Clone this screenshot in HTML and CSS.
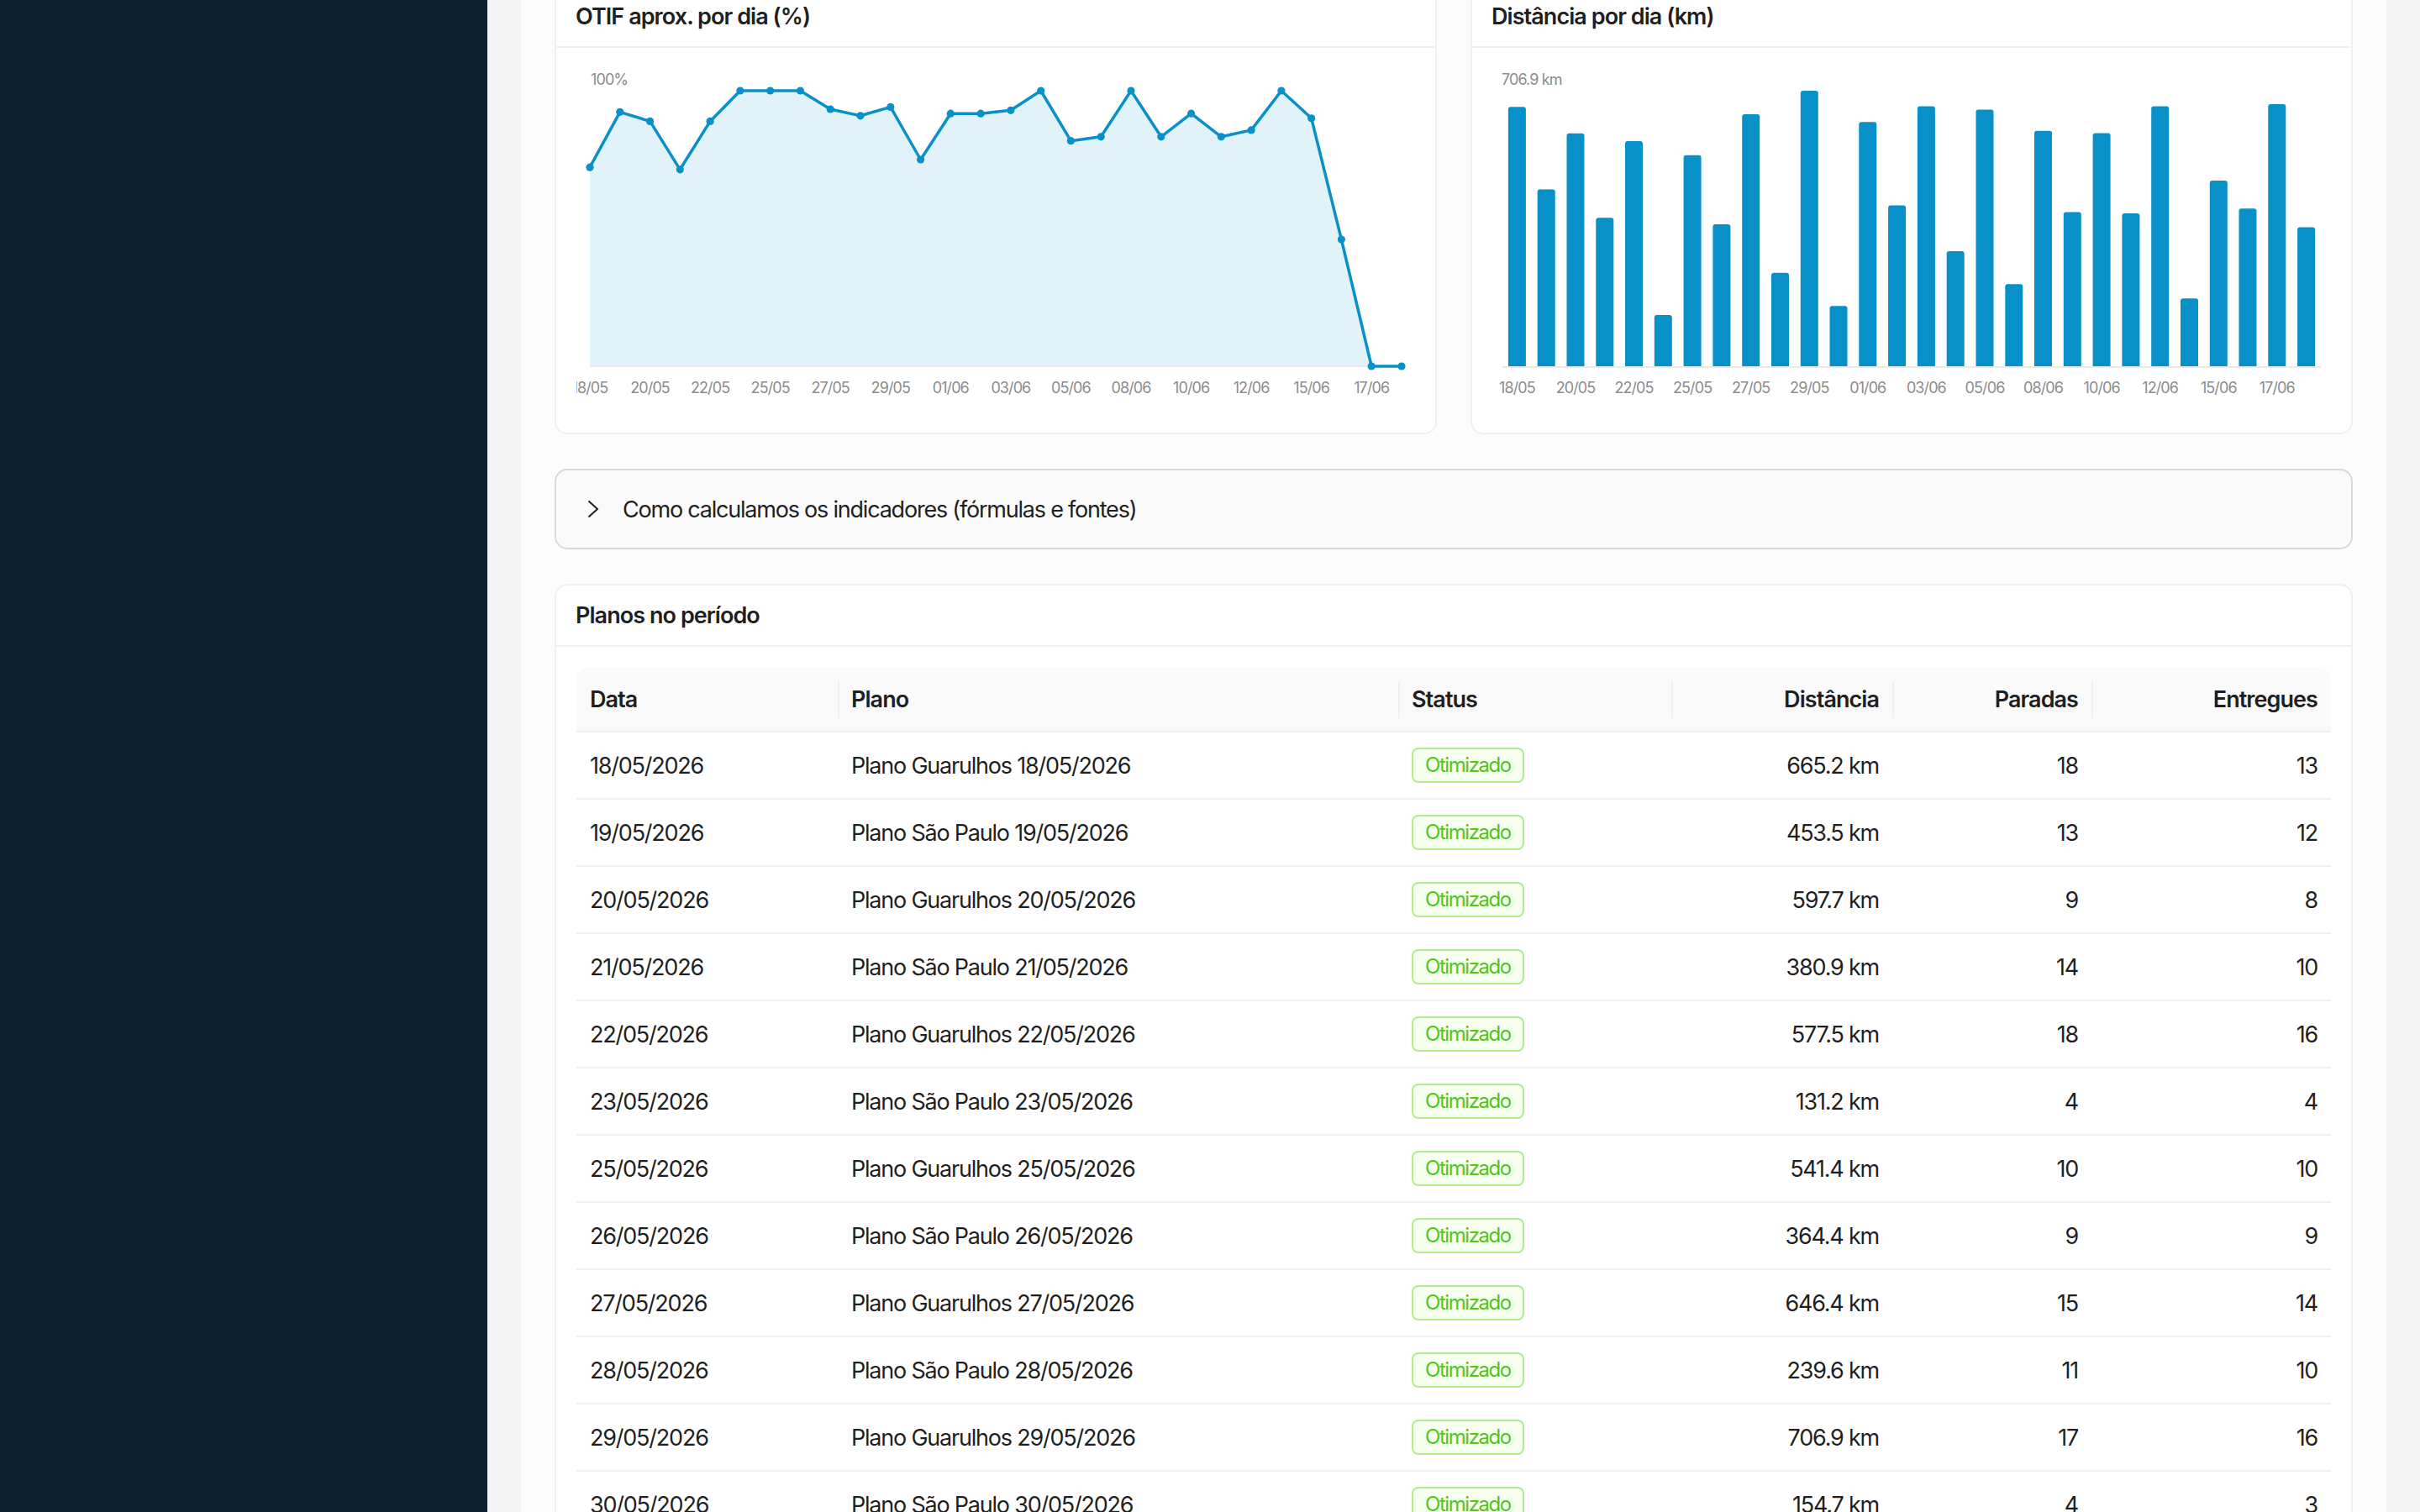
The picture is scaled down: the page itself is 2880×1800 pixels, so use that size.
FILE: index.html
```html
<!DOCTYPE html>
<html lang="pt-BR">
<head>
    <meta charset="UTF-8">
    <meta name="viewport" content="width=device-width, initial-scale=1.0">
    <title>Relatórios</title>
    <link rel="stylesheet" href="styles.css">
</head>
<body>

<div class="app">
    <aside class="sidebar"></aside>

    <main class="main">
        <div class="panel">

            <div class="charts">
                <div class="card">
                    <div class="card-head">OTIF aprox. por dia (%)</div>
                    <div class="card-body chart" id="otifChart"></div>
                </div>
                <div class="card">
                    <div class="card-head">Distância por dia (km)</div>
                    <div class="card-body chart" id="kmChart"></div>
                </div>
            </div>

            <div class="collapse">
                <svg class="chevron" viewBox="0 0 14 22" width="14" height="22">
                    <polyline points="1.5,1.5 12,11 1.5,20.5"></polyline>
                </svg>
                <span>Como calculamos os indicadores (fórmulas e fontes)</span>
            </div>

            <div class="card">
                <div class="card-head">Planos no período</div>
                <div class="card-body">
                    <table class="plans">
                        <colgroup>
                            <col style="width: 311px">
                            <col style="width: 667px">
                            <col style="width: 325px">
                            <col style="width: 263px">
                            <col style="width: 237px">
                            <col style="width: 285px">
                        </colgroup>
                        <thead>
                            <tr>
                                <th>Data</th>
                                <th>Plano</th>
                                <th>Status</th>
                                <th class="num">Distância</th>
                                <th class="num">Paradas</th>
                                <th class="num">Entregues</th>
                            </tr>
                        </thead>
                        <tbody>
                            <tr><td>18/05/2026</td><td>Plano Guarulhos 18/05/2026</td><td><span class="tag">Otimizado</span></td><td class="num">665.2 km</td><td class="num">18</td><td class="num">13</td></tr>
                            <tr><td>19/05/2026</td><td>Plano São Paulo 19/05/2026</td><td><span class="tag">Otimizado</span></td><td class="num">453.5 km</td><td class="num">13</td><td class="num">12</td></tr>
                            <tr><td>20/05/2026</td><td>Plano Guarulhos 20/05/2026</td><td><span class="tag">Otimizado</span></td><td class="num">597.7 km</td><td class="num">9</td><td class="num">8</td></tr>
                            <tr><td>21/05/2026</td><td>Plano São Paulo 21/05/2026</td><td><span class="tag">Otimizado</span></td><td class="num">380.9 km</td><td class="num">14</td><td class="num">10</td></tr>
                            <tr><td>22/05/2026</td><td>Plano Guarulhos 22/05/2026</td><td><span class="tag">Otimizado</span></td><td class="num">577.5 km</td><td class="num">18</td><td class="num">16</td></tr>
                            <tr><td>23/05/2026</td><td>Plano São Paulo 23/05/2026</td><td><span class="tag">Otimizado</span></td><td class="num">131.2 km</td><td class="num">4</td><td class="num">4</td></tr>
                            <tr><td>25/05/2026</td><td>Plano Guarulhos 25/05/2026</td><td><span class="tag">Otimizado</span></td><td class="num">541.4 km</td><td class="num">10</td><td class="num">10</td></tr>
                            <tr><td>26/05/2026</td><td>Plano São Paulo 26/05/2026</td><td><span class="tag">Otimizado</span></td><td class="num">364.4 km</td><td class="num">9</td><td class="num">9</td></tr>
                            <tr><td>27/05/2026</td><td>Plano Guarulhos 27/05/2026</td><td><span class="tag">Otimizado</span></td><td class="num">646.4 km</td><td class="num">15</td><td class="num">14</td></tr>
                            <tr><td>28/05/2026</td><td>Plano São Paulo 28/05/2026</td><td><span class="tag">Otimizado</span></td><td class="num">239.6 km</td><td class="num">11</td><td class="num">10</td></tr>
                            <tr><td>29/05/2026</td><td>Plano Guarulhos 29/05/2026</td><td><span class="tag">Otimizado</span></td><td class="num">706.9 km</td><td class="num">17</td><td class="num">16</td></tr>
                            <tr><td>30/05/2026</td><td>Plano São Paulo 30/05/2026</td><td><span class="tag">Otimizado</span></td><td class="num">154.7 km</td><td class="num">4</td><td class="num">3</td></tr>
                        </tbody>
                    </table>
                </div>
            </div>

        </div>
    </main>
</div>

<script src="charts.js"></script>
</body>
</html>
```

FILE: styles.css
```css
* {
    box-sizing: border-box;
}
html, body {
    height: 100%;
}
body {
    margin: 0;
    font-family: "Inter", "Liberation Sans", sans-serif;
    font-size: 27px;
    letter-spacing: -0.045em;
    color: #1f1f1f;
    background-color: #f4f4f4;
    overflow: hidden;
}
.app {
    display: flex;
    height: 100%;
}
.sidebar {
    width: 580px;
    flex-shrink: 0;
    background-color: #0c2233;
}
.main {
    flex: 1;
    padding: 0 40px;
    overflow: hidden;
}
.panel {
    height: 100%;
    padding: 0 40px;
    background-color: #fcfcfc;
    display: flex;
    flex-direction: column;
    gap: 41px;
}
.panel > * {
    flex-shrink: 0;
}
.charts {
    display: grid;
    grid-template-columns: 1fr 1fr;
    gap: 40px;
    margin-top: -18px;
}
.card {
    background-color: #fff;
    border: 2px solid #f0f0f0;
    border-radius: 15px;
}
.card-head {
    height: 73px;
    padding: 0 23px;
    display: flex;
    align-items: center;
    border-bottom: 2px solid #f0f0f0;
    font-weight: 600;
    letter-spacing: -0.035em;
}
.card-body {
    padding: 24px;
}
.chart svg {
    display: block;
}
.axis {
    font-size: 18px;
    letter-spacing: -0.05em;
    fill: #8c8c8c;
}
.area {
    fill: rgba(8, 145, 200, 0.12);
}
.base {
    stroke: #e8e8e8;
    stroke-width: 2;
}
.line {
    fill: none;
    stroke: #0891c8;
    stroke-width: 3.5;
    stroke-linejoin: round;
}
.dot, .bar {
    fill: #0891c8;
}

.collapse {
    height: 96px;
    padding: 0 37px;
    display: flex;
    align-items: center;
    background-color: #fafafa;
    border: 2px solid #d9d9d9;
    border-radius: 15px;
}
.chevron {
    margin-right: 28px;
}
.chevron polyline {
    fill: none;
    stroke: #1f1f1f;
    stroke-width: 2;
}

.plans {
    width: 100%;
    table-layout: fixed;
    border-collapse: separate;
    border-spacing: 0;
}
.plans th, .plans td {
    padding: 0 16px;
    text-align: left;
    border-bottom: 2px solid #f0f0f0;
}
.plans th {
    position: relative;
    height: 78px;
    background-color: #fafafa;
    font-weight: 600;
    letter-spacing: -0.035em;
}
.plans th:first-child {
    border-top-left-radius: 15px;
}
.plans th:last-child {
    border-top-right-radius: 15px;
}
.plans th + th::before {
    content: "";
    position: absolute;
    left: 0;
    top: 17px;
    width: 2px;
    height: 44px;
    background-color: #f0f0f0;
}
.plans td {
    height: 80px;
}
.plans .num {
    text-align: right;
}
.tag {
    display: block;
    width: fit-content;
    height: 42px;
    padding: 0 14px;
    line-height: 38px;
    font-size: 24px;
    letter-spacing: -0.06em;
    color: #52c41a;
    background-color: #f6ffed;
    border: 2px solid #b7eb8f;
    border-radius: 8px;
}
```

FILE: charts.js
```js
const dias = ['18/05', '19/05', '20/05', '21/05', '22/05', '23/05', '25/05', '26/05', '27/05', '28/05',
    '29/05', '30/05', '01/06', '02/06', '03/06', '04/06', '05/06', '06/06', '08/06', '09/06',
    '10/06', '11/06', '12/06', '13/06', '15/06', '16/06', '17/06', '18/06'];

const otif = [72.2, 92.3, 88.9, 71.4, 88.9, 100, 100, 100, 93.3, 90.9, 94.1, 75.0, 91.7, 91.7,
    92.9, 100, 81.8, 83.3, 100, 83.3, 91.7, 83.3, 85.7, 100, 90.0, 46.0, 0, 0];

const km = [665.2, 453.5, 597.7, 380.9, 577.5, 131.2, 541.4, 364.4, 646.4, 239.6, 706.9, 154.7,
    626.8, 412.5, 666.8, 295.2, 658.1, 210.6, 604.2, 395.7, 598.3, 392.1, 666.8, 174.2,
    476.6, 404.5, 672.6, 356.4];

const W = 998, H = 410, TOP = 27, BASE = 355;

function labels(xs) {
    let out = '';
    xs.forEach((x, i) => {
        if (i % 2 === 0) {
            out += `<text class="axis" x="${x.toFixed(1)}" y="386.5" text-anchor="middle">${dias[i]}</text>`;
        }
    });
    return out;
}

function drawOtif() {
    const xs = otif.map((v, i) => 16 + i * 966 / 27);
    const ys = otif.map(v => BASE - v / 100 * (BASE - TOP));
    const pts = xs.map((x, i) => x.toFixed(1) + ',' + ys[i].toFixed(1)).join(' ');

    let svg = `<svg width="${W}" height="${H}" viewBox="0 0 ${W} ${H}">`;
    svg += '<text class="axis" x="17" y="19.5">100%</text>';
    svg += `<polygon class="area" points="16,${BASE} ${pts} 982,${BASE}"/>`;
    svg += `<line class="base" x1="16" y1="${BASE}" x2="982" y2="${BASE}"/>`;
    svg += `<polyline class="line" points="${pts}"/>`;
    xs.forEach((x, i) => {
        svg += `<circle class="dot" cx="${x.toFixed(1)}" cy="${ys[i].toFixed(1)}" r="4.6"/>`;
    });
    svg += labels(xs);
    svg += '</svg>';
    document.getElementById('otifChart').innerHTML = svg;
}

function drawKm() {
    const max = Math.max(...km);
    const band = 974 / km.length;
    const bw = 21;
    const centers = km.map((v, i) => 12 + band * i + band / 2);

    let svg = `<svg width="${W}" height="${H}" viewBox="0 0 ${W} ${H}">`;
    svg += `<text class="axis" x="11" y="19.5">${max.toFixed(1)} km</text>`;
    svg += `<line class="base" x1="12" y1="${BASE + 1}" x2="986" y2="${BASE + 1}"/>`;
    km.forEach((v, i) => {
        const h = v / max * (BASE - TOP);
        const x = centers[i] - bw / 2;
        const y = BASE - h;
        const r = 3;
        svg += `<path class="bar" d="M${x.toFixed(1)},${BASE} V${(y + r).toFixed(1)} Q${x.toFixed(1)},${y.toFixed(1)} ${(x + r).toFixed(1)},${y.toFixed(1)} H${(x + bw - r).toFixed(1)} Q${(x + bw).toFixed(1)},${y.toFixed(1)} ${(x + bw).toFixed(1)},${(y + r).toFixed(1)} V${BASE} Z"/>`;
    });
    svg += labels(centers);
    svg += '</svg>';
    document.getElementById('kmChart').innerHTML = svg;
}

drawOtif();
drawKm();
```
